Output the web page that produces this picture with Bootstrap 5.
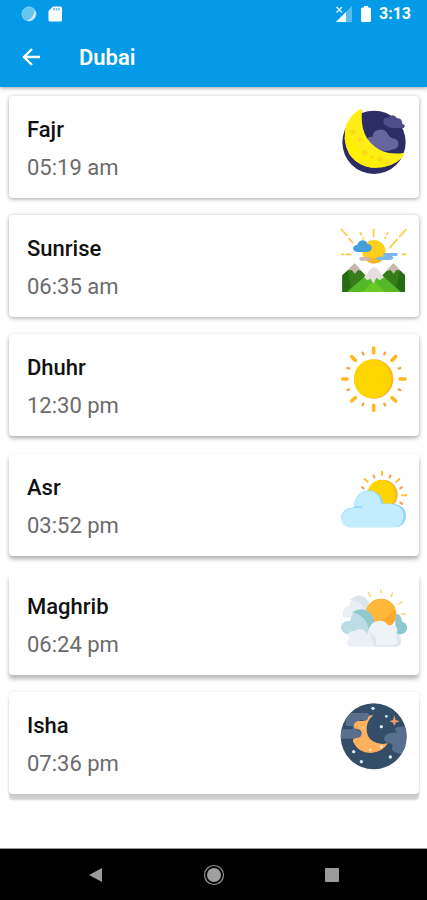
<!DOCTYPE html>
<html lang="en">
<head>
<meta charset="utf-8">
<meta name="viewport" content="width=device-width, initial-scale=1">
<title>Dubai prayer times</title>
<link href="https://cdn.jsdelivr.net/npm/bootstrap@5.3.0/dist/css/bootstrap.min.css" rel="stylesheet">
<style>
body { font-family: Roboto, "Liberation Sans", sans-serif; background: #fff; }
.app-head { background: #039be7; box-shadow: 0 1px 4px rgba(0,0,0,.4); }
.status-row { height: 28px; padding: 0 16px 0 20px; font-size: 16px; }
.tool-row { height: 59px; padding: 0 20px; gap: 37px; }
.tool-row h1 { font-size: 22px; line-height: 28px; font-weight: 600; }
.icon-btn { line-height: 0; }
.times { padding: 9px 8px 54px 9px; }
.time-card { border: 0; border-radius: 4px; padding: 15px 11px 11px 18px; box-shadow: 0 1px 4px rgba(0,0,0,.36); }
.time-card:nth-child(n+3) { box-shadow: 0 2px 4px rgba(0,0,0,.34); }
.time-card:nth-child(n+4) { box-shadow: 0 3px 4px rgba(0,0,0,.32); }
.time-card:nth-child(n+5) { box-shadow: 0 4px 4px rgba(0,0,0,.28); }
.time-card:nth-child(n+6) { box-shadow: 0 6px 2px rgba(0,0,0,.19), 0 0 3px rgba(0,0,0,.12); }
.time-card h2, .time-card p { font-size: 22px; line-height: 38px; margin: 0; }
.time-card h2 { font-weight: 500; color: #111; }
.time-card p { color: #6b6b6b; }
.time-card svg { width: 68px; height: 68px; margin-top: -4px; }
.sys-nav { background: #000; height: 52px; border-top: 1px solid #999; }
.sys-nav .icon-btn { width: 118px; }
</style>
<script src="https://cdn.jsdelivr.net/npm/bootstrap@5.3.0/dist/js/bootstrap.bundle.min.js" defer></script>
</head>
<body class="d-flex flex-column min-vh-100">

<header class="app-head text-white">
  <div class="status-row d-flex align-items-center justify-content-between">
    <div class="d-flex align-items-center gap-2">
      <svg width="18" height="18" viewBox="0 0 18 18" aria-hidden="true"><circle cx="9" cy="9" r="7" fill="#65c3f0" stroke="#8bd2f5"/><path d="M15 6.500A7 7 0 0 1 8 15.500Q13.500 13.500 15 6.500Z" fill="#d5f0fd" stroke="#d5f0fd"/></svg>
      <svg width="18" height="18" viewBox="0 0 18 18" aria-hidden="true"><path d="M7 1.500H14.500Q16 1.500 16 3V15Q16 16.500 14.500 16.500H4Q2.500 16.500 2.500 15V6Z" fill="#fff"/><path d="M8 3V5.500M10.500 3V5.500M13 3V5.500" stroke="#5fbcec" stroke-width="1.500"/></svg>
    </div>
    <div class="d-flex align-items-center fw-bold">
      <svg width="18" height="18" viewBox="0 0 18 18" aria-hidden="true"><path d="M17 1V17H1Z" fill="#55bdf0"/><path d="M11 7V17H1Z" fill="#fff"/><path d="M1.500 2L7 7.500M7 2L1.500 7.500" stroke="#d5f0ff" stroke-width="1.500"/></svg>
      <svg class="ms-2 me-2" width="10" height="18" viewBox="0 0 10 18" aria-hidden="true"><path d="M3 1H7V2.500H8.500Q10 2.500 10 4V15.500Q10 17 8.500 17H1.500Q0 17 0 15.500V4Q0 2.500 1.500 2.500H3Z" fill="#fff"/></svg>
      <span>3:13</span>
    </div>
  </div>
  <div class="tool-row d-flex align-items-center">
    <button type="button" class="icon-btn btn p-0 border-0 text-white" aria-label="Back">
      <svg width="22" height="22" viewBox="0 0 22 22" fill="none" stroke="currentColor" stroke-width="2.400"><path d="M20 10H3.500M12 2L4 10L12 18"/></svg>
    </button>
    <h1 class="m-0">Dubai</h1>
  </div>
</header>

<main class="times flex-grow-1 d-flex flex-column justify-content-between">
  <article class="time-card card flex-row justify-content-between align-items-start">
    <div><h2>Fajr</h2><p>05:19 am</p></div>
    <svg viewBox="30 33 204 204" aria-hidden="true">
      <circle cx="132" cy="139" r="95" fill="#2d2d66"/>
      <path d="M110 165Q98 138 113 126Q123 120 128 123Q128 103 147 101Q165 99 174 114Q180 127 193 128Q206 130 205 145Q204 158 190 160Q164 171 139 157Q118 178 110 165Z" fill="#66669f"/>
      <path d="M160 72Q165 62 176 65Q190 50 201 67Q216 66 217 83Q230 88 221 96H184Q157 89 160 72Z" fill="#4f4d89"/>
      <path d="M97 38Q70 45 51 82Q34 130 58 174Q86 214 134 215Q190 213 215 185Q224 175 223 170Q184 178 149 161Q85 126 97 38Z" fill="#ffed16"/>
      <path d="M51 82Q34 130 58 174Q86 214 134 215Q185 215 215 185Q155 207 110 178Q57 146 51 82Z" fill="#fff100"/>
      <g fill="#fbdc12"><circle cx="69" cy="107" r="8"/><circle cx="91" cy="130" r="7"/><circle cx="104" cy="170" r="8"/><circle cx="150" cy="190" r="9"/><circle cx="126" cy="183" r="5"/><circle cx="172" cy="201" r="5"/></g>
    </svg>
  </article>

  <article class="time-card card flex-row justify-content-between align-items-start">
    <div><h2>Sunrise</h2><p>06:35 am</p></div>
    <svg viewBox="30 30 204 204" aria-hidden="true">
      <g stroke="#f8cc42" stroke-width="5" fill="none"><path d="M33 39L52 60M56 66L69 81M131 38V64M229 40L208 62M202 69L178 97M90 48L95 58M98 64L101 70M174 48L170 57M168 62L164 69M33 115H43M47 115H64M215 115H229"/></g>
      <circle cx="132" cy="107" r="35" fill="#ffcf1b"/><path d="M107 132Q133 153 157 132L144 126H115Z" fill="#f5b529"/>
      <path d="M83 108C64 106 66 87 82 86C88 67 110 70 112 84C130 84 129 106 113 108Z" fill="#459fda"/>
      <path d="M93 123H118Q126 130 116 134H93Q82 128 93 123Z" fill="#cbb8a8"/>
      <path d="M163 111H200Q207 115 200 120H186Q196 129 178 132H145Q133 127 145 122H163Q155 115 163 111Z" fill="#7ab7ed"/>
      <path d="M37 178L74 143L108 180L92 228H37ZM225 178L190 143L155 180L172 228H225Z" fill="#367d19"/>
      <path d="M37 178L53 164L61 214L50 228H37ZM225 178L210 164L198 213L213 228H225Z" fill="#266b12"/>
      <path d="M51 228L106 180H159L212 228Z" fill="#55b829"/>
      <path d="M131 194L165 228H98Z" fill="#68c825"/>
      <path d="M53 163L74 142L95 166L84 162L75 173L65 162ZM169 166L190 142L211 163L199 162L191 173L181 162Z" fill="#c7b7ad"/>
      <path d="M102 184L122 158Q132 151 142 158L162 184L149 193L139 185L131 203L121 188L112 193Z" fill="#e6dfdc"/>
    </svg>
  </article>

  <article class="time-card card flex-row justify-content-between align-items-start">
    <div><h2>Dhuhr</h2><p>12:30 pm</p></div>
    <svg viewBox="30 28 204 204" aria-hidden="true">
      <circle cx="131" cy="130" r="59" fill="#fdb51b"/><ellipse cx="128" cy="130" rx="56" ry="58" fill="#ffd500"/>
      <g stroke="#ffb91e" stroke-width="11" stroke-linecap="round"><path d="M131 37V51M131 209V224M38 130H51M210 130H225M65 63L76 74M197 63L186 74M65 196L76 186M197 196L186 186"/></g>
      <g stroke="#f6a33d" stroke-width="7" stroke-linecap="round"><path d="M98 51L100 56M165 51L163 56M98 209L100 204M165 209L163 204M52 97L57 99M211 97L206 99M52 163L57 161M211 163L206 161"/></g>
    </svg>
  </article>

  <article class="time-card card flex-row justify-content-between align-items-start">
    <div><h2>Asr</h2><p>03:52 pm</p></div>
    <svg viewBox="30 26 204 204" aria-hidden="true">
      <g stroke="#fac43b" stroke-width="6" stroke-linecap="round"><path d="M156 46V57M104 68L113 76M208 68L199 76M216 117H229"/></g>
      <g stroke="#f3a356" stroke-width="7" stroke-linecap="round"><path d="M131 58L133 63M181 58L179 63M97 93L101 96M215 93L211 96M211 139L216 142"/></g>
      <circle cx="158" cy="115" r="45" fill="#fdb61e"/><ellipse cx="154" cy="115" rx="41" ry="44" fill="#ffd400"/>
      <path d="M72 153C72 88 151 85 161 143C205 136 228 153 228 177Q228 211 193 213H64C24 213 22 160 64 154Z" fill="#94d8f6"/>
      <path d="M72 154C74 92 147 87 154 143C199 139 220 154 220 178Q220 211 186 213H64C24 213 22 160 72 154Z" fill="#c3ecff"/>
      <path d="M72 153Q84 150 96 153" fill="none" stroke="#94d8f6" stroke-width="5"/>
    </svg>
  </article>

  <article class="time-card card flex-row justify-content-between align-items-start">
    <div><h2>Maghrib</h2><p>06:24 pm</p></div>
    <svg viewBox="30 24 204 204" aria-hidden="true">
      <g stroke="#f6d75a" stroke-width="4" stroke-linecap="round"><path d="M115 49L121 61M153 41V51M188 51L183 61M216 77L207 84M214 114L227 115"/></g>
      <path d="M40 124C34 103 46 92 58 91C62 48 117 48 119 94L107 127Z" fill="#e8eef3"/><path d="M60 72Q85 47 106 68Q119 76 119 94L104 112Q104 76 60 72Z" fill="#dce5eb"/>
      <path d="M195 116Q211 108 217 137Q236 144 230 163Q223 178 197 175Z" fill="#8cc8cf"/>
      <circle cx="153" cy="114" r="46" fill="#faa82e"/><path d="M110 98Q122 69 153 68Q187 72 196 98Q171 135 127 138Q106 121 110 98Z" fill="#ffb83a"/>
      <path d="M62 176C24 176 23 132 61 135C66 91 122 87 130 133L133 176Z" fill="#bcdde5"/><path d="M66 109Q105 84 130 124L133 150L116 164Q112 119 66 109Z" fill="#91c8d0"/>
      <path d="M63 212C45 210 48 190 61 187C45 176 62 160 75 166C89 150 111 165 112 177C116 126 166 126 174 148C198 142 208 158 199 172C219 176 219 209 201 212Z" fill="#eaf0f5"/>
      <path d="M112 164Q127 179 133 211H201Q219 205 210 182Q202 168 199 172Q207 190 187 195Q150 203 134 184Z" fill="#dde6ee"/>
      <path d="M121 163C119 130 164 125 174 154Q197 147 197 167Q190 187 203 194Q203 207 185 207H138Q142 177 121 163Z" fill="#eef3f7"/>
    </svg>
  </article>

  <article class="time-card card flex-row justify-content-between align-items-start">
    <div><h2>Isha</h2><p>07:36 pm</p></div>
    <svg viewBox="30 32 204 204" aria-hidden="true">
      <circle cx="131" cy="132" r="99" fill="#344e69"/>
      <path d="M62 62H113Q127 70 111 83H86Q98 91 88 98Q83 101 82 114Q97 118 94 130Q92 139 79 139H34Q30 125 36 111H65Q76 107 65 101H49Q40 85 62 62Z" fill="#586f8d"/>
      <path d="M225 103Q234 127 225 166L214 184Q200 183 193 179Q182 173 188 160Q188 154 178 153Q164 151 162 141Q164 123 184 121H202Q188 109 201 104Z" fill="#586f8d"/>
      <path d="M130 69Q114 66 113 81Q106 88 86 85Q65 92 73 108Q92 111 95 121Q96 137 77 137Q64 141 71 151Q85 181 122 182Q158 180 174 152Q151 160 129 147Q108 134 110 107Q111 84 130 69Z" fill="#ffb05c"/>
      <path d="M193 69L197 83L209 87L197 91L193 101L189 91L178 87L189 83Z" fill="#ed9c67"/>
      <g fill="#d7edf7"><circle cx="129" cy="48" r="5"/><circle cx="169" cy="72" r="4"/><circle cx="154" cy="103" r="5"/><circle cx="71" cy="178" r="5"/><circle cx="94" cy="208" r="5"/><circle cx="181" cy="194" r="5"/></g>
      <g fill="#ffe1b4"><circle cx="100" cy="106" r="4"/><circle cx="121" cy="173" r="4"/><circle cx="154" cy="163" r="5"/></g>
    </svg>
  </article>
</main>

<nav class="sys-nav d-flex justify-content-center align-items-center" aria-label="System">
  <button type="button" class="icon-btn btn p-0 border-0" aria-label="Back"><svg width="22" height="22" viewBox="0 0 22 22"><path d="M4 11L17 4V18Z" fill="#9b9b9b"/></svg></button>
  <button type="button" class="icon-btn btn p-0 border-0" aria-label="Home"><svg width="22" height="22" viewBox="0 0 22 22"><circle cx="11" cy="11" r="9.500" fill="none" stroke="#929292" stroke-width="1.200"/><circle cx="11" cy="11" r="7" fill="#a0a0a0"/></svg></button>
  <button type="button" class="icon-btn btn p-0 border-0" aria-label="Recent apps"><svg width="22" height="22" viewBox="0 0 22 22"><rect x="4" y="4" width="14" height="14" rx="1" fill="#9b9b9b"/></svg></button>
</nav>
</body>
</html>
